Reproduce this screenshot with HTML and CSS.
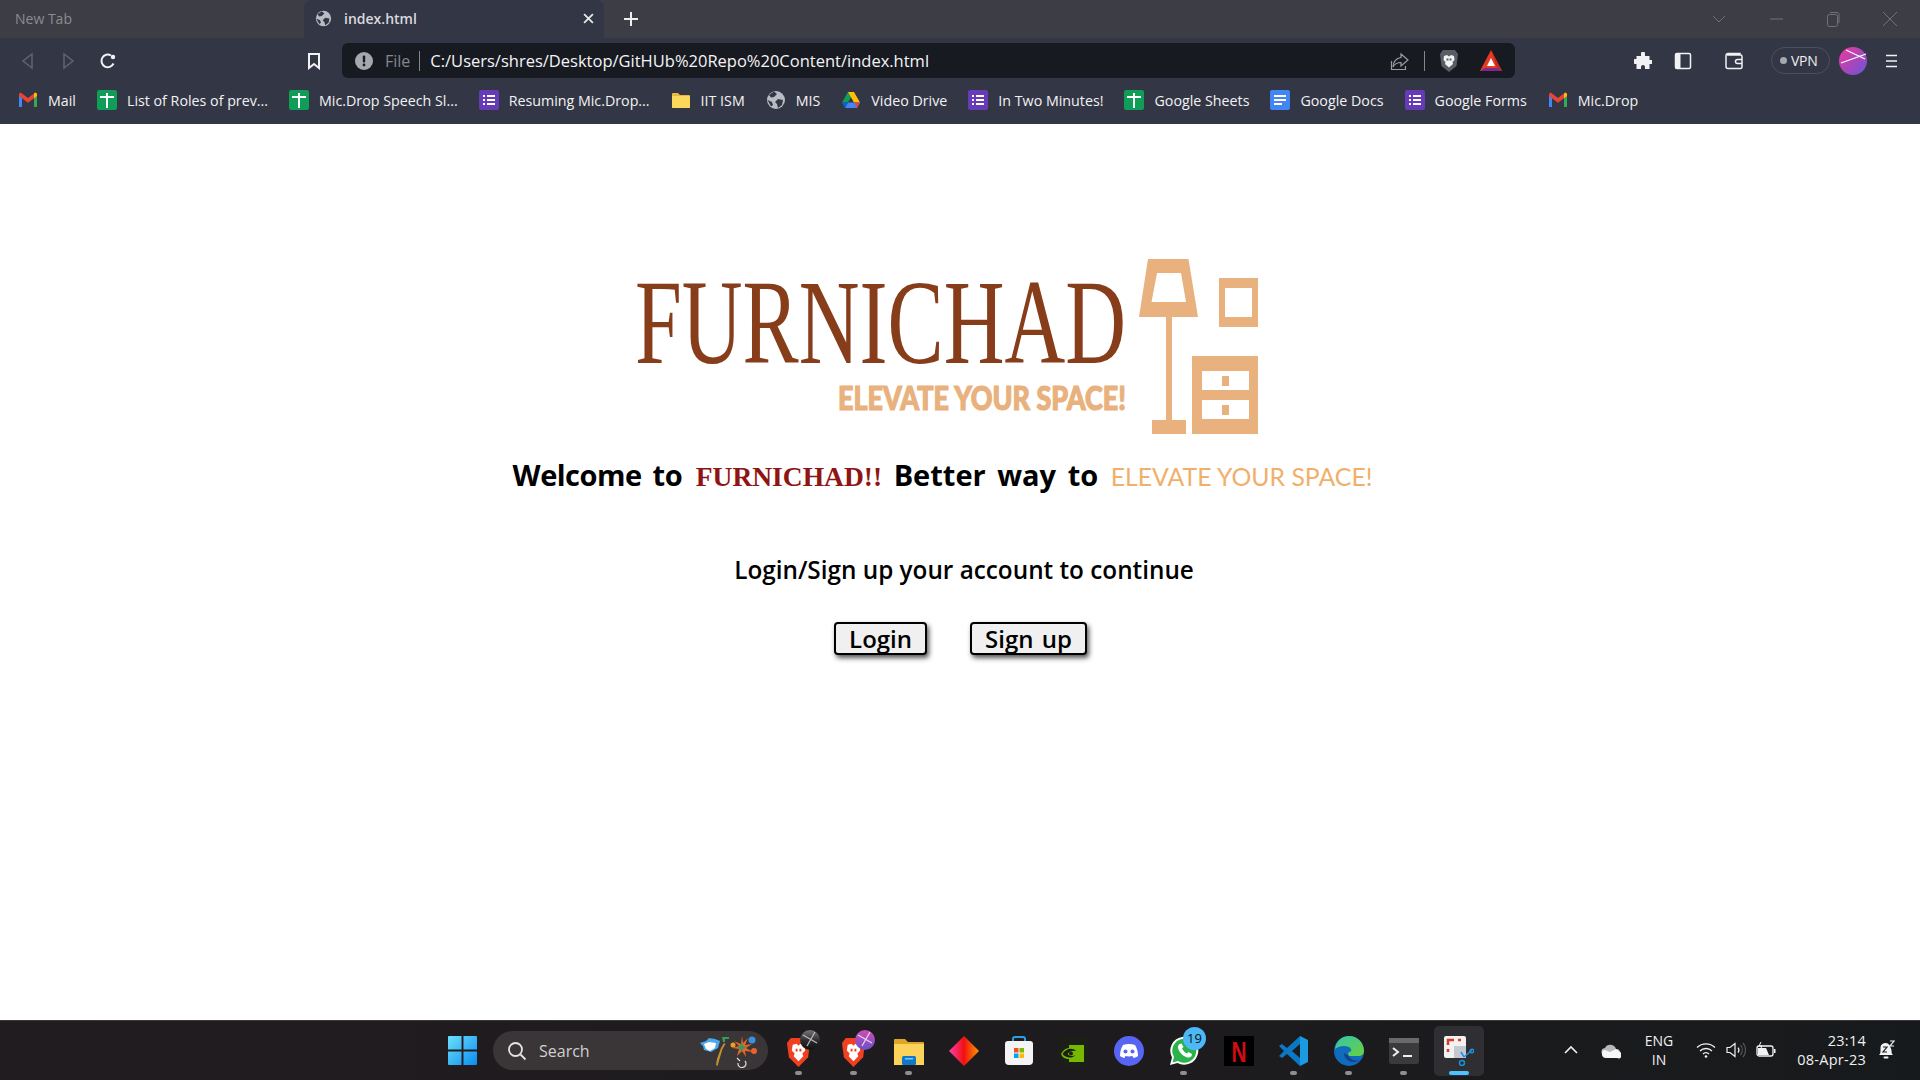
FILE: index.html
```html
<!DOCTYPE html>
<html lang="en">
<head>
  <meta charset="UTF-8">
  <title>index.html</title>
  <link rel="stylesheet" href="styles.css">
</head>
<body>
  <svg class="sprite">
    <symbol id="gmail" viewBox="0 0 20 16">
      <path d="M1 15V3l3 2v10z" fill="#4285f4"/><path d="M16 15V5l3-2v12z" fill="#34a853"/>
      <path d="M1 4V2.500C1 1 2.600.4 3.700 1.200L10 6l6.300-4.800C17.400.4 19 1 19 2.500V4l-3 2.200-6 4.500-6-4.500z" fill="#ea4335"/>
      <path d="M16 6.200l3-2.200V2.500C19 1 17.400.4 16.300 1.200L16 1.500z" fill="#fbbc04"/>
    </symbol>
    <symbol id="sheets" viewBox="0 0 20 20">
      <rect width="20" height="20" rx="2" fill="#0f9d58"/><path d="M3 6h6V3h2v3h6v2H11v10H9V8H3z" fill="#fff"/>
    </symbol>
    <symbol id="forms" viewBox="0 0 20 20">
      <rect width="20" height="20" rx="2" fill="#673ab7"/>
      <path d="M4 5h2v2H4zm4 0h8v2H8zM4 9h2v2H4zm4 0h8v2H8zm-4 4h2v2H4zm4 0h8v2H8z" fill="#fff"/>
    </symbol>
    <symbol id="docs" viewBox="0 0 20 20">
      <rect width="20" height="20" rx="2" fill="#4285f4"/><path d="M4 5h12v2H4zm0 4h12v2H4zm0 4h8v2H4z" fill="#fff"/>
    </symbol>
    <symbol id="folder" viewBox="0 0 20 18">
      <path d="M1 3a1 1 0 0 1 1-1h5l2 2h9a1 1 0 0 1 1 1v11a1 1 0 0 1-1 1H2a1 1 0 0 1-1-1z" fill="#e9b93f"/>
      <rect x="1" y="5" width="18" height="12" rx="1" fill="#fbd75b"/>
    </symbol>
    <symbol id="globe" viewBox="0 0 20 20">
      <circle cx="10" cy="10" r="9" fill="#b9bcc4"/>
      <path d="M8 1.500L11 4 8 7l-3 .5L3 5zM12 9l5 1-1 5-4 3-1-4-2-2zM1.500 10L6 12l1 3-2 1.500z" fill="#333645"/>
    </symbol>
    <symbol id="drive" viewBox="0 0 20 18">
      <path d="M7 1h6l-6 10.500H1z" fill="#0f9d58"/><path d="M7 1h6l6 10.500h-6z" fill="#ffc107"/>
      <path d="M4 17l3-5.500h12L16 17z" fill="#4285f4"/><path d="M1 11.500h6L4 17z" fill="#0066da"/><path d="M19 11.500h-6l3 5.500z" fill="#ea4335"/>
    </symbol>
    <symbol id="brave" viewBox="0 0 26 32">
      <path d="M5 1h16l4 5-2 15-10 10L3 21 1 6z" fill="#f1401f"/>
      <path d="M7 8l4-1 2 2 2-2 4 1 1 6-3 3 1 3-5 5-5-5 1-3-3-3z" fill="#fff"/>
      <path d="M10 12h2v3h-2zm4 0h2v3h-2z" fill="#f1401f"/>
    </symbol>
    <linearGradient id="ball-dark" x1="0" y1="0" x2="0" y2="1"><stop offset="0" stop-color="#77777b"/><stop offset=".55" stop-color="#2a2a2c"/><stop offset="1" stop-color="#111"/></linearGradient>
    <linearGradient id="ball-purple" x1="0" y1="0" x2="0" y2="1"><stop offset="0" stop-color="#d24cb0"/><stop offset="1" stop-color="#6a50c8"/></linearGradient>
  </svg>

  <div class="tabstrip">
    <div class="tab-idle">New Tab</div>
    <div class="tab-active">
      <svg class="i17"><use href="#globe"/></svg>
      <span>index.html</span>
      <svg class="tab-close" viewBox="0 0 10 10"><path d="M1 1l8 8M9 1l-8 8" stroke="#e8e8ea" stroke-width="1.600"/></svg>
    </div>
    <div class="tab-plus">
      <svg class="i16" viewBox="0 0 16 16"><path d="M8 1v14M1 8h14" stroke="#eee" stroke-width="2"/></svg>
    </div>
    <div class="win-controls">
      <div class="win-btn"><svg class="i16" viewBox="0 0 16 16"><path d="M2 5l6 6 6-6" fill="none" stroke="#70727a"/></svg></div>
      <div class="win-btn"><svg class="i16" viewBox="0 0 16 16"><path d="M2 8h13" stroke="#70727a"/></svg></div>
      <div class="win-btn"><svg class="i16" viewBox="0 0 16 16"><rect x="2.500" y="3.500" width="10" height="12" rx="2" fill="none" stroke="#70727a"/><path d="M5 1.500h7a2 2 0 0 1 2 2V12" fill="none" stroke="#70727a"/></svg></div>
      <div class="win-btn"><svg class="i16" viewBox="0 0 16 16"><path d="M1 1l14 14M15 1L1 15" stroke="#70727a"/></svg></div>
    </div>
  </div>

  <div class="toolbar">
    <div class="tool tool-first"><svg class="i18" viewBox="0 0 18 18"><path d="M13 2v14L4 9z" fill="none" stroke="#61646f" stroke-width="1.500"/></svg></div>
    <div class="tool"><svg class="i18" viewBox="0 0 18 18"><path d="M5 2v14l9-7z" fill="none" stroke="#61646f" stroke-width="1.500"/></svg></div>
    <div class="tool"><svg class="i18" viewBox="0 0 18 18"><path d="M14.500 11.500A6.300 6.300 0 1 1 12 3.500" fill="none" stroke="#f2f2f4" stroke-width="2"/><circle cx="14" cy="5" r="2.200" fill="#f2f2f4"/></svg></div>
    <div class="tool tool-bookmark"><svg class="i18" viewBox="0 0 18 18"><path d="M4 2h10v14l-5-4-5 4z" fill="none" stroke="#f2f2f4" stroke-width="2"/></svg></div>
    <div class="address">
      <svg class="i18 addr-info" viewBox="0 0 18 18"><circle cx="9" cy="9" r="9" fill="#a6a8b0"/><rect x="7.800" y="3.500" width="2.400" height="7" rx="1" fill="#181a21"/><circle cx="9" cy="13" r="1.400" fill="#181a21"/></svg>
      <span class="addr-file">File</span>
      <span class="addr-sep"></span>
      <span class="addr-url">C:/Users/shres/Desktop/GitHUb%20Repo%20Content/index.html</span>
      <svg class="i20" viewBox="0 0 20 20"><path d="M11 3l7 6-7 6v-3.500C7 11.500 4.500 13 3 16c0-5 3-9 8-9.500z" fill="none" stroke="#9a9ca4" stroke-width="1.200"/><path d="M1.500 10v8.500h14V15" fill="none" stroke="#9a9ca4" stroke-width="1.200"/></svg>
      <span class="addr-sep addr-sep-right"></span>
      <svg class="addr-shield" viewBox="0 0 20 24"><path d="M4 1h12l3 4-1.500 12L10 23 2.500 17 1 5z" fill="#5a5c66"/><path d="M5 7l3-1 2 1.500L12 6l3 1 .5 4-2 2 .5 2-4 3.500L6 15l.5-2-2-2z" fill="#f2f2f4"/><path d="M7.500 9.500h2v2h-2zm3 0h2v2h-2z" fill="#5a5c66"/></svg>
      <svg class="addr-bat" viewBox="0 0 24 24"><path d="M12 1l11 21H1z" fill="#e83a22"/><path d="M12 1l11 21-5-3z" fill="#c5281c"/><path d="M1 22h22l-5-3H6z" fill="#7a2a8c"/><path d="M12 9l4 8H8z" fill="#fff"/></svg>
    </div>
    <div class="tool tool-puzzle"><svg class="i18" viewBox="0 0 18 18"><path d="M7 1.500a2 2 0 0 1 4 0V4h4.500v4H18a2 2 0 0 1 0 4h-2.500v5H11v-2a2 2 0 0 0-4 0v2H2.500v-5H1a2.500 2.500 0 0 1 0-5h1.500V4H7z" fill="#f2f2f4"/></svg></div>
    <div class="tool"><svg class="i18" viewBox="0 0 18 18"><rect x="1.500" y="1.500" width="15" height="15" rx="1.500" fill="none" stroke="#f2f2f4" stroke-width="1.500"/><rect x="1.500" y="1.500" width="5" height="15" fill="#f2f2f4"/></svg></div>
    <div class="tool tool-wallet"><svg class="i20" viewBox="0 0 20 20"><path d="M16 4V2.500H4A2 2 0 0 0 2 4.500v11A2 2 0 0 0 4 17.500h12.500A1.500 1.500 0 0 0 18 16V5.500A1.500 1.500 0 0 0 16.500 4H3" fill="none" stroke="#f2f2f4" stroke-width="1.500"/><path d="M18 8.500h-4.500a2 2 0 0 0 0 4H18" fill="none" stroke="#f2f2f4" stroke-width="1.500"/></svg></div>
    <div class="vpn"><span class="vpn-dot"></span>VPN</div>
    <svg class="avatar" viewBox="0 0 28 28">
      <defs><linearGradient id="ava" x1="0" y1="0" x2="1" y2="1"><stop offset="0" stop-color="#f0389a"/><stop offset="1" stop-color="#6a54d8"/></linearGradient></defs>
      <circle cx="14" cy="14" r="14" fill="url(#ava)"/><path d="M2 16L27 7M7 3l19 9" stroke="#fff" stroke-width="1.200"/>
    </svg>
    <div class="tool tool-menu"><svg class="i16" viewBox="0 0 16 16"><path d="M3 2.500h11M3 8h11M3 13.500h11" stroke="#f2f2f4" stroke-width="1.500"/></svg></div>
  </div>

  <div class="bookmarks">
    <div class="bm"><svg class="bm-icon"><use href="#gmail"/></svg>Mail</div>
    <div class="bm"><svg class="bm-icon"><use href="#sheets"/></svg>List of Roles of prev...</div>
    <div class="bm"><svg class="bm-icon"><use href="#sheets"/></svg>Mic.Drop Speech Sl...</div>
    <div class="bm"><svg class="bm-icon"><use href="#forms"/></svg>Resuming Mic.Drop...</div>
    <div class="bm"><svg class="bm-icon"><use href="#folder"/></svg>IIT ISM</div>
    <div class="bm"><svg class="bm-icon"><use href="#globe"/></svg>MIS</div>
    <div class="bm"><svg class="bm-icon"><use href="#drive"/></svg>Video Drive</div>
    <div class="bm"><svg class="bm-icon"><use href="#forms"/></svg>In Two Minutes!</div>
    <div class="bm"><svg class="bm-icon"><use href="#sheets"/></svg>Google Sheets</div>
    <div class="bm"><svg class="bm-icon"><use href="#docs"/></svg>Google Docs</div>
    <div class="bm"><svg class="bm-icon"><use href="#forms"/></svg>Google Forms</div>
    <div class="bm"><svg class="bm-icon"><use href="#gmail"/></svg>Mic.Drop</div>
  </div>

  <main class="page">
    <svg class="logo" viewBox="630 235 635 200">
      <text class="logo-name" transform="translate(635 363) scale(.6957 1)">FURNICHAD</text>
      <text class="logo-tag" x="838" y="410" textLength="288" lengthAdjust="spacingAndGlyphs">ELEVATE YOUR SPACE!</text>
      <g fill="#e8b17e">
        <path fill-rule="evenodd" d="M1148 259h40.500l9.500 58h-59zM1157 273l-5.500 29h34.500l-5-29z"/>
        <rect x="1166" y="317" width="6" height="104"/>
        <rect x="1152" y="420" width="34" height="14"/>
        <path fill-rule="evenodd" d="M1219 278h39v49h-39zM1225 288v29h27v-29z"/>
        <path fill-rule="evenodd" d="M1192 356h66v78h-66zM1202 371v19h47v-19zM1202 400v19h47v-19z"/>
        <rect x="1222" y="376" width="7" height="10"/>
        <rect x="1222" y="405" width="7" height="10"/>
      </g>
    </svg>
    <h1 class="welcome"><span class="lead">Welcome to</span> <span class="brand">FURNICHAD!!</span> Better way to <span class="slogan">ELEVATE YOUR SPACE!</span></h1>
    <p class="prompt">Login/Sign up your account to continue</p>
    <div class="actions">
      <button class="btn">Login</button>
      <button class="btn">Sign up</button>
    </div>
  </main>

  <div class="taskbar">
    <svg class="start" viewBox="0 0 30 30">
      <defs><linearGradient id="win" x1="0" y1="0" x2="1" y2="1"><stop offset="0" stop-color="#6ee0fb"/><stop offset="1" stop-color="#0a8cf0"/></linearGradient></defs>
      <path d="M0 1a1 1 0 0 1 1-1h13v14H0zM16 0h13a1 1 0 0 1 1 1v13H16zM0 16h14v14H1a1 1 0 0 1-1-1zM16 16h14v13a1 1 0 0 1-1 1H16z" fill="url(#win)"/>
    </svg>
    <div class="search">
      <svg class="i20" viewBox="0 0 20 20"><circle cx="8.500" cy="8.500" r="6.500" fill="none" stroke="#e4e4e4" stroke-width="1.800"/><path d="M13.500 13.500l5 5" stroke="#e4e4e4" stroke-width="1.800"/></svg>
      <span class="search-label">Search</span>
      <svg class="search-art" viewBox="0 0 58 34">
        <path d="M0 9l6-2 3-3 6 1 5 2-2 7-7 4-7-2-1-4z" fill="#4aa8ee"/><path d="M4 10l5-2 7 1-1 5-5 3-4-2z" fill="#fff"/>
        <path d="M21 14l3-5 1.500 1-3 5-3 10-2 7-1.500-1 1-6z" fill="#c89030"/><path d="M22 3h7v2h-4v3h-2z" fill="#2f9e5b"/>
        <path d="M42 2l1 7 5-5-3 7 7-1-6 4 7 4-8-1 1 6-4-6-5 5 2-7-7-1 7-2-5-5 7 3z" fill="#e8632a"/>
        <path d="M42 8l1 4 3 1-3 2-1 3-2-3-3-1 3-2z" fill="#2f9e5b"/>
        <circle cx="52" cy="6" r="3.500" fill="#3a90e0"/><circle cx="33" cy="11" r="2.500" fill="#f0a020"/><circle cx="54" cy="17" r="3" fill="#e8632a"/>
        <path d="M37 24l3 3M45 27a4 4 0 1 1-7 2" fill="none" stroke="#ddd" stroke-width="1.200"/>
      </svg>
    </div>
    <div class="apps">
      <div class="app app-on">
        <svg class="app-brave"><use href="#brave"/></svg>
        <svg class="app-ball" viewBox="0 0 20 20"><circle cx="10" cy="10" r="10" fill="url(#ball-dark)"/><path d="M3 5l14 8M15 2L7 16" stroke="#bbb" stroke-width="1.200"/></svg>
      </div>
      <div class="app app-on">
        <svg class="app-brave"><use href="#brave"/></svg>
        <svg class="app-ball" viewBox="0 0 20 20"><circle cx="10" cy="10" r="10" fill="url(#ball-purple)"/><path d="M3 5l14 8M15 2L7 16" stroke="#ecd4f4" stroke-width="1.200"/></svg>
      </div>
      <div class="app app-on">
        <svg class="app-icon" viewBox="0 0 30 30"><path d="M0 4a1 1 0 0 1 1-1h10l3 3h15a1 1 0 0 1 1 1v21H0z" fill="#e0a526"/><rect y="8" width="30" height="21" fill="#fbd35a"/><rect x="8" y="20" width="14" height="9" rx="1.500" fill="#0f78c8"/><rect x="11" y="22" width="8" height="1.500" fill="#7cc8f4"/></svg>
      </div>
      <div class="app">
        <svg class="app-icon" viewBox="0 0 30 30"><defs><linearGradient id="git" x1="0" y1="0" x2="1" y2="0"><stop offset="0" stop-color="#ff3fb0"/><stop offset=".5" stop-color="#f01010"/><stop offset="1" stop-color="#ff9a00"/></linearGradient></defs><path d="M15 0l15 15-15 15L0 15z" fill="url(#git)"/></svg>
      </div>
      <div class="app">
        <svg class="app-icon" viewBox="0 0 30 30"><path d="M9 6V3a2 2 0 0 1 2-2h8a2 2 0 0 1 2 2v3" fill="none" stroke="#2aa0e0" stroke-width="2"/><path d="M1 8a3 3 0 0 1 3-3h22a3 3 0 0 1 3 3v17a4 4 0 0 1-4 4H5a4 4 0 0 1-4-4z" fill="#f4f4f4"/><path d="M10 12h4.500v4.500H10z" fill="#f25022"/><path d="M15.500 12H20v4.500h-4.500z" fill="#7fba00"/><path d="M10 17.500h4.500V22H10z" fill="#00a4ef"/><path d="M15.500 17.500H20V22h-4.500z" fill="#ffb900"/></svg>
      </div>
      <div class="app">
        <svg class="app-icon" viewBox="0 0 30 30"><rect width="30" height="30" fill="#1c1f17"/><path d="M10 9h15v17H10v-3c-4 0-7-2-8-5 2-4 5-6 8-6z" fill="#76b900"/><path d="M3.500 18c3-5 9-7 14-3-3-1-7 0-9 3 2 2 5 3 8 1-4 4-10 3-13-1z" fill="#1c1f17"/><circle cx="12" cy="17.500" r="2" fill="#1c1f17"/></svg>
      </div>
      <div class="app">
        <svg class="app-icon" viewBox="0 0 30 30"><circle cx="15" cy="15" r="15" fill="#5865f2"/><path d="M9 9c4-1.500 8-1.500 12 0 2 3 3 7 3 11-1.500 1.200-3 1.800-4.500 2l-1-2c-2.300.6-4.700.6-7 0l-1 2C9 21.800 7.500 21.200 6 20c0-4 1-8 3-11z" fill="#fff"/><circle cx="11.500" cy="15.500" r="2" fill="#5865f2"/><circle cx="18.500" cy="15.500" r="2" fill="#5865f2"/></svg>
      </div>
      <div class="app app-on">
        <svg class="app-icon" viewBox="0 0 30 30"><path d="M1 29l2-7.500A14 14 0 1 1 8.500 27z" fill="#fff"/><path d="M3.500 26.500l1.500-5.500A12 12 0 1 1 9 25z" fill="#29b34a"/><path d="M10.500 8c-1.500 1-2 3-1 5.500 1.500 3.500 4 6 7.500 7.500 2.500 1 4.500.5 5.500-1l.5-2-3.500-2-1.500 1.500c-2-.8-4-2.800-5-5l1.500-1.500-2-3.500z" fill="#fff"/></svg>
        <span class="badge">19</span>
      </div>
      <div class="app">
        <svg class="app-icon" viewBox="0 0 30 30"><rect width="30" height="30" fill="#000"/><text class="netflix" x="15" y="25.500" textLength="15" lengthAdjust="spacingAndGlyphs">N</text></svg>
      </div>
      <div class="app app-on">
        <svg class="app-icon" viewBox="0 0 30 30"><path d="M21 0l8 4v22l-8 4z" fill="#1a9ae0"/><path d="M21 0L8 12 3 8 0 10l5 5-5 5 3 2 5-4 13 12v-8l-8-7 8-7z" fill="#0a78c4"/></svg>
      </div>
      <div class="app app-on">
        <svg class="app-icon" viewBox="0 0 30 30"><defs><linearGradient id="edge" x1="0" y1="0" x2="1" y2="1"><stop offset="0" stop-color="#34c6a8"/><stop offset="1" stop-color="#6ad040"/></linearGradient></defs><circle cx="15" cy="15" r="15" fill="#0f6cbd"/><path d="M1 13C2 5 8 0 15 0c9 0 15 7 15 15 0 3-2 5-6 5H15c-1-1-1-3 0-4 3 0 3-3 0-5-5-2-10-1-14 2z" fill="url(#edge)"/><path d="M10 17c0 6 6 10 12 9l4-2c-3 1-9 1-11-4-2-1-3-2-5-3z" fill="#1b3f8c"/></svg>
      </div>
      <div class="app app-on">
        <svg class="app-icon" viewBox="0 0 30 30"><rect y="2" width="30" height="26" rx="2" fill="#3a3a3c"/><rect y="2" width="30" height="5" fill="#6a6a6c"/><path d="M4 12l5 4-5 4" fill="none" stroke="#eee" stroke-width="2"/><path d="M14 20h9" stroke="#eee" stroke-width="2"/></svg>
      </div>
      <div class="app app-current">
        <svg class="app-icon" viewBox="0 0 30 30"><rect width="22" height="22" rx="2" fill="#f2f2f2"/><path d="M4 9V4h6M14 4h3M4 13v3" fill="none" stroke="#d83b2a" stroke-width="2.500"/><rect x="10" y="10" width="12" height="12" fill="#c4c8d0"/><path d="M17 16l3 5M28 14l-8 7" stroke="#1a90d8" stroke-width="1.500"/><circle cx="18" cy="27" r="2.500" fill="none" stroke="#1a90d8" stroke-width="1.500"/><circle cx="28" cy="15" r="1.800" fill="none" stroke="#1a90d8" stroke-width="1.500"/></svg>
      </div>
    </div>
    <div class="tray">
      <div class="tray-item tray-chev"><svg class="i16" viewBox="0 0 16 16"><path d="M2 11l6-6 6 6" fill="none" stroke="#eee" stroke-width="1.600"/></svg></div>
      <div class="tray-item tray-cloud"><svg class="i20" viewBox="0 0 20 14"><path d="M5 13a4 4 0 0 1-1-8 6 6 0 0 1 11 1 3.500 3.500 0 0 1 1 7z" fill="#b8b8b8"/><path d="M1 10a3 3 0 0 1 3-3l5 2 6-3 4 3a3 3 0 0 1-3 6H5a4 4 0 0 1-4-3z" fill="#f6f6f6"/></svg></div>
      <div class="tray-lang"><span>ENG</span><span>IN</span></div>
      <div class="tray-item tray-wifi"><svg class="i20" viewBox="0 0 20 16"><path d="M1 5.500a13 13 0 0 1 18 0M4 9a8.500 8.500 0 0 1 12 0M7 12a4 4 0 0 1 6 0" fill="none" stroke="#f2f2f2" stroke-width="1.300"/><circle cx="10" cy="14.500" r="1.300" fill="#f2f2f2"/></svg></div>
      <div class="tray-item tray-sound"><svg class="i20" viewBox="0 0 20 18"><path d="M1 6.500h3L9 2.500v13l-5-4H1z" fill="none" stroke="#f2f2f2" stroke-width="1.200"/><path d="M12 6.500a4 4 0 0 1 0 5" fill="none" stroke="#f2f2f2" stroke-width="1.200"/><path d="M14.500 4a8 8 0 0 1 0 10M17 2a11 11 0 0 1 0 14" fill="none" stroke="#55565a" stroke-width="1.200"/></svg></div>
      <div class="tray-item tray-battery"><svg class="i20" viewBox="0 0 20 16"><rect x="1" y="4" width="16" height="10" rx="2" fill="none" stroke="#f2f2f2" stroke-width="1.300"/><path d="M2 6h8l3 7H2z" fill="#f2f2f2"/><rect x="18" y="7" width="1.500" height="4" fill="#f2f2f2"/><path d="M5 0L3 4h3L4 8" fill="none" stroke="#f2f2f2"/></svg></div>
      <div class="tray-clock"><span>23:14</span><span>08-Apr-23</span></div>
      <div class="tray-item tray-bell"><svg class="i20" viewBox="0 0 20 20"><path d="M3 15c1-1 1.500-2 1.500-4V8a5 5 0 0 1 9-3l2 5v1c0 2 .5 3 1.500 4z" fill="#f2f2f2"/><rect x="7.500" y="16.500" width="5" height="2" rx="1" fill="#f2f2f2"/><path d="M7 7h4l-4 5h4" fill="none" stroke="#191b1d" stroke-width="1.200"/><path d="M14 1h4l-4 5h4" fill="none" stroke="#f2f2f2" stroke-width="1.200"/></svg></div>
    </div>
  </div>
</body>
</html>
```

FILE: styles.css
```css
* {
  box-sizing: border-box;
}
html, body {
  margin: 0;
  padding: 0;
}
body {
  width: 1920px;
  height: 1080px;
  overflow: hidden;
  display: flex;
  flex-direction: column;
  font-family: "Open Sans", "Liberation Sans", sans-serif;
  background: #fff;
}
svg {
  display: block;
  flex: none;
}
.sprite {
  width: 0;
  height: 0;
  position: absolute;
}
.i16 { width: 16px; height: 16px; }
.i17 { width: 17px; height: 17px; }
.i18 { width: 18px; height: 18px; }
.i20 { width: 20px; height: 20px; }

/* tabs */
.tabstrip {
  height: 38px;
  display: flex;
  align-items: stretch;
  background: #3d3d45;
  font-size: 14px;
}
.tab-idle {
  width: 304px;
  padding: 0 0 2px 15px;
  display: flex;
  align-items: center;
  color: #8b8c92;
}
.tab-active {
  width: 300px;
  display: flex;
  align-items: center;
  gap: 12px;
  padding: 0 10px 2px 11px;
  background: #333645;
  border-radius: 8px 8px 0 0;
  color: #d8d9dd;
  font-weight: 600;
}
.tab-close {
  width: 11px;
  height: 11px;
  margin-left: auto;
}
.tab-plus {
  width: 54px;
  padding-bottom: 1px;
  display: flex;
  align-items: center;
  justify-content: center;
}
.win-controls {
  margin-left: auto;
  padding-right: 2px;
  display: flex;
}
.win-btn {
  width: 57px;
  display: flex;
  align-items: center;
  justify-content: center;
}

/* toolbar */
.toolbar {
  height: 43px;
  padding: 5px 0 3px 8px;
  display: flex;
  align-items: center;
  background: #333645;
}
.tool {
  width: 40px;
  display: flex;
  justify-content: center;
}
.tool-bookmark { margin: 0 8px 0 166px; }
.tool-puzzle { margin-left: 108px; }
.tool-wallet { margin-left: 11px; }
.tool-menu { margin-left: 4px; }
.address {
  width: 1173px;
  height: 35px;
  padding-right: 12px;
  display: flex;
  align-items: center;
  background: #181a21;
  border-radius: 6px;
}
.addr-info { margin-left: 13px; }
.addr-file {
  margin-left: 12px;
  font-size: 16px;
  color: #85878f;
}
.addr-sep {
  width: 1px;
  height: 20px;
  margin: 0 10px 0 9px;
  background: #85878f;
}
.addr-url {
  flex: 1;
  font-size: 16.500px;
  color: #f4f4f6;
}
.addr-sep-right {
  margin: 0 14px;
}
.addr-shield {
  width: 20px;
  height: 24px;
}
.addr-bat {
  width: 24px;
  height: 24px;
  margin-left: 20px;
}
.vpn {
  width: 59px;
  height: 27px;
  margin-left: 17px;
  display: flex;
  align-items: center;
  gap: 4px;
  padding-left: 8px;
  border: 1.500px solid #4c505f;
  border-radius: 14px;
  color: #eeeef0;
  font-size: 14px;
  letter-spacing: -0.3px;
}
.vpn-dot {
  width: 7px;
  height: 7px;
  background: #a6a8b0;
  border-radius: 50%;
}
.avatar {
  width: 28px;
  height: 28px;
  margin-left: 9px;
}

/* bookmarks */
.bookmarks {
  height: 43px;
  padding: 0 0 5px 18px;
  display: flex;
  align-items: center;
  gap: 21px;
  background: #333645;
  color: #f2f2f4;
  font-size: 14.250px;
}
.bm {
  display: flex;
  align-items: center;
  gap: 10px;
  white-space: nowrap;
}
.bm-icon {
  width: 20px;
  height: 20px;
}

/* page body */
.page {
  flex: 1;
  padding-top: 111px;
  display: flex;
  flex-direction: column;
  align-items: center;
  background: #fff;
}
.logo {
  width: 635px;
  height: 200px;
  margin-right: 25px;
}
.logo-name {
  font-family: "Liberation Serif", serif;
  font-size: 121px;
  fill: #873d1a;
}
.logo-tag {
  font-family: "Lato", sans-serif;
  font-weight: 900;
  font-size: 33px;
  fill: #e8b17e;
  stroke: #e8b17e;
  stroke-width: 1.200px;
}
.welcome {
  margin: 20px 35px 0 0;
  font-size: 29px;
  font-weight: 700;
  line-height: 40px;
  word-spacing: 4px;
  color: #000;
}
.lead {
  letter-spacing: -0.5px;
}
.brand {
  margin-left: 2px;
  font-family: "Liberation Serif", serif;
  font-size: 27.500px;
  color: #8f1414;
  word-spacing: 0;
}
.slogan {
  margin-left: 1px;
  font-family: "Lato", sans-serif;
  font-weight: 400;
  font-size: 24.800px;
  color: #f0b06c;
  word-spacing: 0;
}
.prompt {
  margin: 55px 0 0 8px;
  font-size: 24.300px;
  font-weight: 600;
  line-height: 35px;
  color: #000;
}
.actions {
  margin-top: 35px;
  display: flex;
  gap: 43px;
  margin-left: 1px;
}
.btn {
  height: 33px;
  padding: 0 13px;
  font-family: "Open Sans", sans-serif;
  font-size: 24px;
  font-weight: 600;
  line-height: 1;
  word-spacing: 2px;
  background: #f0f0f0;
  border: 2px solid #000;
  border-radius: 4px;
  box-shadow: 2px 3px 5px #555;
  color: #000;
}

/* taskbar */
.taskbar {
  height: 60px;
  padding-left: 448px;
  display: flex;
  align-items: center;
  background: linear-gradient(90deg, #211c1f, #1d1b1e 60%, #171a1c);
  border-top: 1px solid #3a383a;
}
.start {
  width: 29px;
  height: 29px;
}
.search {
  width: 275px;
  height: 39px;
  margin-left: 16px;
  padding: 0 10px 0 14px;
  display: flex;
  align-items: center;
  background: #3a3637;
  border-radius: 20px;
}
.search-label {
  margin-left: 12px;
  font-size: 16px;
  color: #d0d0d0;
}
.search-art {
  width: 58px;
  height: 34px;
  margin-left: auto;
}
.apps {
  margin-left: 3px;
  display: flex;
}
.app {
  position: relative;
  width: 55px;
  height: 50px;
  display: flex;
  align-items: center;
  justify-content: center;
}
.app-icon {
  width: 30px;
  height: 30px;
}
.app-brave {
  width: 25px;
  height: 31px;
  margin-top: 3px;
}
.app-on::after {
  content: "";
  position: absolute;
  left: 24px;
  bottom: 1px;
  width: 7px;
  height: 4px;
  background: #8e8e90;
  border-radius: 2px;
}
.app-current {
  width: 50px;
  margin-left: 3px;
  background: #2f2f33;
  border-radius: 5px;
}
.app-current::after {
  content: "";
  position: absolute;
  left: 15px;
  bottom: 1px;
  width: 20px;
  height: 4px;
  background: #4cc2ff;
  border-radius: 2px;
}
.app-ball {
  position: absolute;
  top: 4px;
  left: 29px;
  width: 20px;
  height: 20px;
}
.badge {
  position: absolute;
  top: 1px;
  left: 27px;
  width: 23px;
  height: 23px;
  background: #4cb8f5;
  border-radius: 50%;
  color: #111;
  font-size: 13px;
  line-height: 23px;
  text-align: center;
}
.netflix {
  font-family: "Liberation Sans", sans-serif;
  font-weight: 700;
  font-size: 30px;
  text-anchor: middle;
  fill: #d40c12;
}
.tray {
  margin-left: auto;
  padding: 0 14px 2px 0;
  display: flex;
  align-items: center;
  color: #f0f0f0;
  font-size: 14px;
}
.tray-item {
  display: flex;
  justify-content: center;
}
.tray-chev { width: 40px; }
.tray-cloud { width: 40px; }
.tray-wifi { width: 37px; }
.tray-sound { width: 24px; }
.tray-battery { width: 36px; }
.tray-bell { width: 40px; }
.tray-lang {
  width: 56px;
  display: flex;
  flex-direction: column;
  align-items: center;
  line-height: 19px;
}
.tray-clock {
  width: 82px;
  display: flex;
  flex-direction: column;
  align-items: flex-end;
  line-height: 19px;
  font-size: 14.500px;
  letter-spacing: 0.25px;
}
```
